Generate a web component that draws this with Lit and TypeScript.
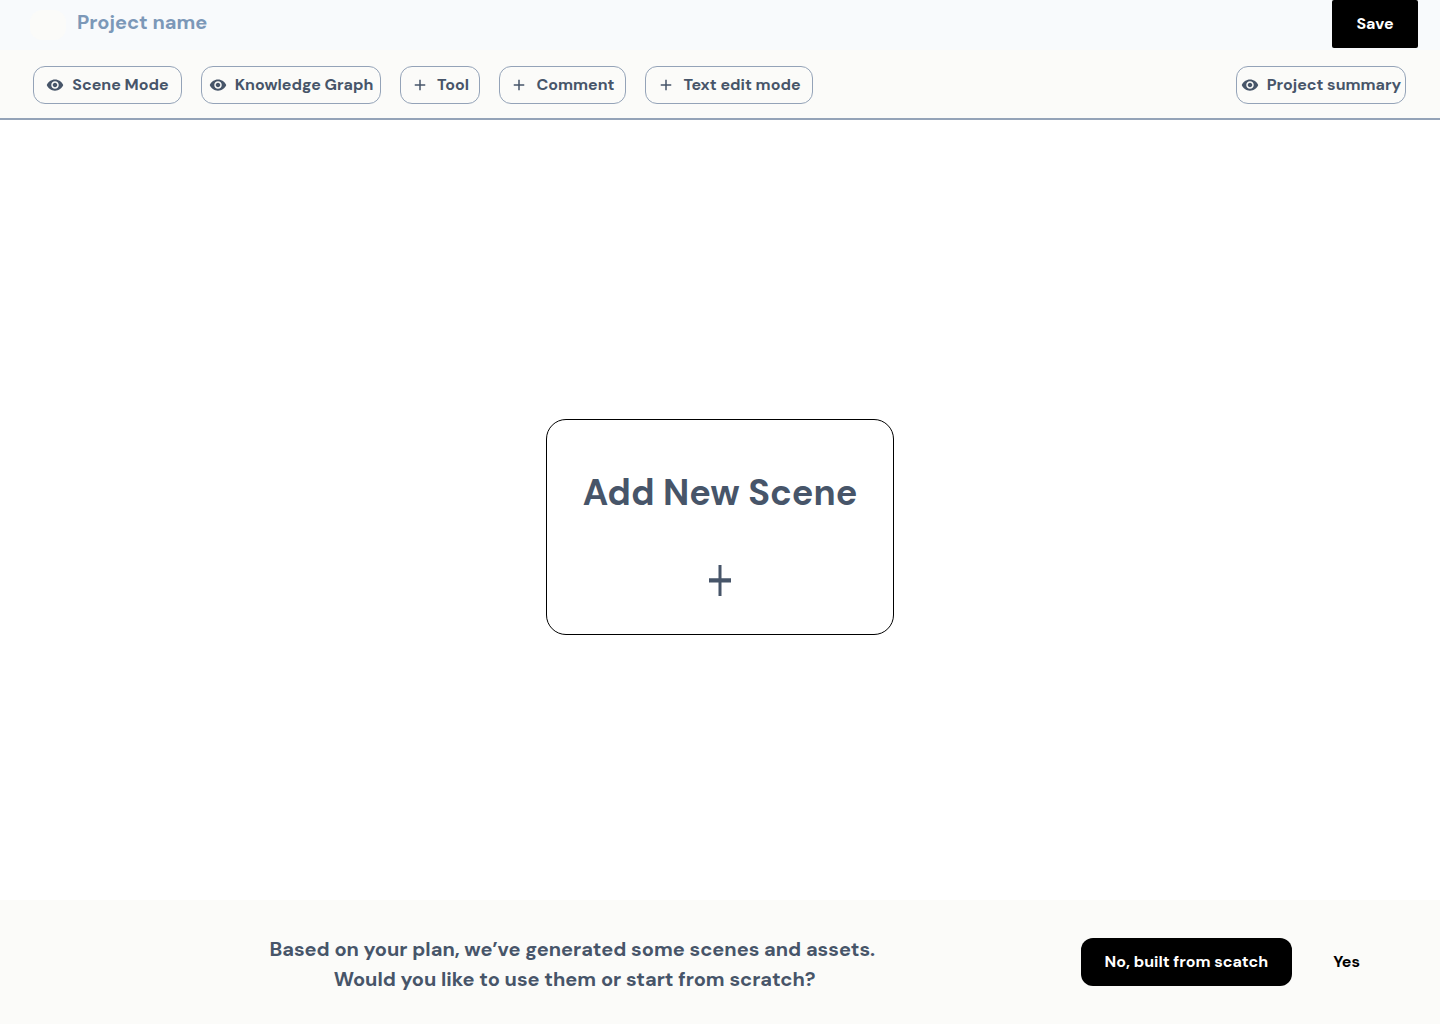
import { LitElement, html, css, svg } from "lit";
import { customElement, property } from "lit/decorators.js";

const icons = {
  eye: svg`<path d="M12 4.5C7 4.5 2.73 7.61 1 12c1.73 4.39 6 7.5 11 7.5s9.27-3.11 11-7.5c-1.73-4.39-6-7.5-11-7.5zM12 17c-2.76 0-5-2.24-5-5s2.24-5 5-5 5 2.24 5 5-2.24 5-5 5zm0-8c-1.66 0-3 1.34-3 3s1.34 3 3 3 3-1.34 3-3-1.34-3-3-3z"/>`,
  plus: svg`<path d="M19 13h-6v6h-2v-6H5v-2h6V5h2v6h6v2z"/>`,
};

@customElement("tool-button")
class ToolButton extends LitElement {
  @property() icon: keyof typeof icons = "plus";
  @property() label = "";

  static styles = css`
    :host {
      display: flex;
    }
    .button {
      flex: 1;
      display: flex;
      align-items: center;
      justify-content: center;
      gap: 8px;
      height: 38px;
      padding: 0;
      border: 1px solid #94a3b8;
      border-radius: 12px;
      background: transparent;
      color: #475569;
      font: 700 16px/24px "DM Sans", Inter, sans-serif;
      white-space: nowrap;
      cursor: pointer;
    }
    .icon {
      flex: none;
      width: 18px;
      height: 18px;
      fill: currentColor;
    }
  `;

  render() {
    return html`<button class="button" type="button">
      <svg class="icon" viewBox="0 0 24 24" aria-hidden="true">${icons[this.icon]}</svg>
      <span>${this.label}</span>
    </button>`;
  }
}

@customElement("app-root")
class AppRoot extends LitElement {
  static styles = css`
    :host {
      display: flex;
      flex-direction: column;
      min-height: 100vh;
      background: #ffffff;
      color: #475569;
      font-family: "DM Sans", Inter, sans-serif;
    }
    .header {
      display: flex;
      align-items: flex-start;
      height: 50px;
      padding: 0 22px 0 30px;
      background: #f8fafc;
    }
    .logo {
      width: 36px;
      height: 30px;
      margin: 10px 11px 0 0;
      border-radius: 12px;
      background: #fbfbf9;
    }
    .name {
      flex: 1;
      margin: 7px 0 0;
      color: #7c98b8;
      font-size: 20px;
      font-weight: 700;
      line-height: 30px;
    }
    .action {
      height: 48px;
      padding: 0 24px;
      border: 0;
      border-radius: 12px;
      background: #000000;
      color: #ffffff;
      font: 700 16px/24px "DM Sans", Inter, sans-serif;
      white-space: nowrap;
      cursor: pointer;
    }
    .save {
      min-width: 86px;
      border-radius: 2px;
    }
    .plain {
      background: transparent;
      color: #000000;
    }
    .toolbar {
      display: flex;
      align-items: center;
      gap: 19px;
      padding: 16px 34px 14px 33px;
      border-bottom: 2px solid #94a3b8;
      background: #fbfbf9;
    }
    .scene {
      width: 149px;
    }
    .graph {
      width: 180px;
    }
    .tool {
      width: 80px;
    }
    .comment {
      width: 127px;
    }
    .text {
      width: 168px;
    }
    .summary {
      width: 170px;
      margin-left: auto;
    }
    .canvas {
      flex: 1;
      display: flex;
      align-items: center;
      justify-content: center;
      padding-top: 34px;
    }
    .card {
      display: flex;
      flex-direction: column;
      align-items: center;
      gap: 44px;
      padding: 45px 36px 38px;
      border: 1px solid #000000;
      border-radius: 20px;
      background: #ffffff;
      color: #475569;
      font: 700 36px/56px "DM Sans", Inter, sans-serif;
      cursor: pointer;
    }
    .cross {
      width: 22px;
      height: 31px;
      fill: currentColor;
    }
    .prompt {
      display: flex;
      align-items: center;
      min-height: 120px;
      padding: 4px 56px 0 64px;
      background: #fbfbf9;
    }
    .message {
      flex: 1;
      margin: 0;
      font-size: 20px;
      font-weight: 700;
      line-height: 30px;
      text-align: center;
    }
    .actions {
      display: flex;
      gap: 17px;
      padding-bottom: 4px;
    }
  `;

  render() {
    return html`
      <header class="header">
        <div class="logo"></div>
        <h1 class="name">Project name</h1>
        <button class="action save" type="button">Save</button>
      </header>
      <nav class="toolbar">
        <tool-button class="scene" icon="eye" label="Scene Mode"></tool-button>
        <tool-button class="graph" icon="eye" label="Knowledge Graph"></tool-button>
        <tool-button class="tool" icon="plus" label="Tool"></tool-button>
        <tool-button class="comment" icon="plus" label="Comment"></tool-button>
        <tool-button class="text" icon="plus" label="Text edit mode"></tool-button>
        <tool-button class="summary" icon="eye" label="Project summary"></tool-button>
      </nav>
      <main class="canvas">
        <button class="card" type="button">
          <span>Add New Scene</span>
          <svg class="cross" viewBox="0 0 22 31" aria-hidden="true">
            <path d="M9.5 0h3v13.2H22v4.4h-9.5V31h-3V17.6H0v-4.4h9.5z" />
          </svg>
        </button>
      </main>
      <footer class="prompt">
        <p class="message">
          Based on your plan, we’ve generated some scenes and assets.<br />&nbsp;Would you like to
          use them or start from scratch?
        </p>
        <div class="actions">
          <button class="action" type="button">No, built from scatch</button>
          <button class="action plain" type="button">Yes</button>
        </div>
      </footer>
    `;
  }
}
